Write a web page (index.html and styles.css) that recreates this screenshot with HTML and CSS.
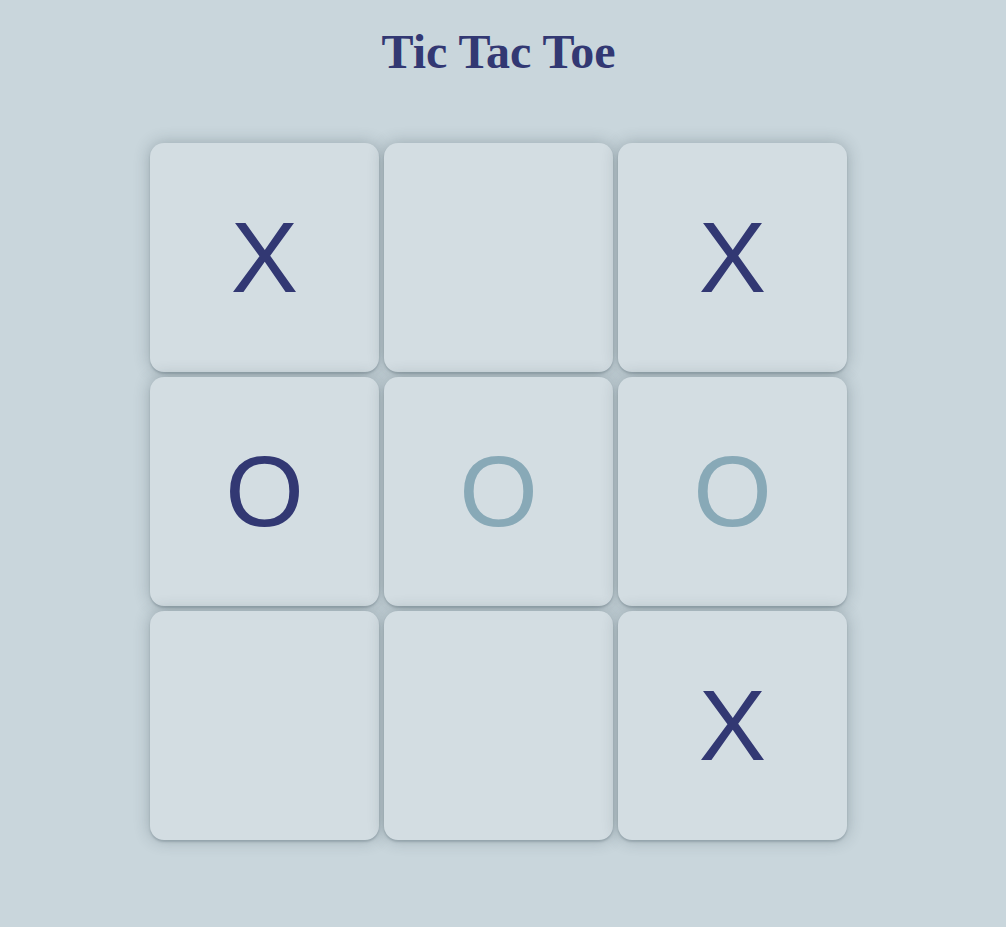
FILE: index.html
```html
<!DOCTYPE html>
<html>
<head>
<meta charset="utf-8">
<link rel="stylesheet" href="styles.css">
<title>Tic Tac Toe</title>
</head>
<body>
<main class="game">
  <h1 class="title">Tic Tac Toe</h1>
  <div class="board">
    <div class="cell">X</div>
    <div class="cell"></div>
    <div class="cell">X</div>
    <div class="cell">O</div>
    <div class="cell win">O</div>
    <div class="cell win">O</div>
    <div class="cell"></div>
    <div class="cell"></div>
    <div class="cell">X</div>
  </div>
</main>
</body>
</html>
```
FILE: styles.css
```css
html, body {
  margin: 0;
  padding: 0;
  background: #c9d6dc;
}
.game {
  width: 997px;
  padding-bottom: 60px;
  display: flex;
  flex-direction: column;
  align-items: center;
}
.title {
  margin: 24px 0 0 0;
  font-family: "Liberation Serif", "Times New Roman", serif;
  font-weight: bold;
  font-size: 48px;
  line-height: 55px;
  color: #323873;
}
.board {
  margin-top: 64px;
  display: grid;
  grid-template-columns: repeat(3, 229px);
  grid-auto-rows: 229px;
  gap: 5px;
}
.cell {
  background: #d3dde2;
  border-radius: 14px;
  box-shadow: 0 2px 2px rgba(40, 60, 70, 0.2), 0 0 16px rgba(40, 60, 70, 0.3);
  display: flex;
  align-items: center;
  justify-content: center;
  font-family: "Liberation Sans", Arial, sans-serif;
  font-size: 101px;
  color: #323873;
  line-height: 1;
}
.cell.win {
  color: #88a9b7;
}
```
